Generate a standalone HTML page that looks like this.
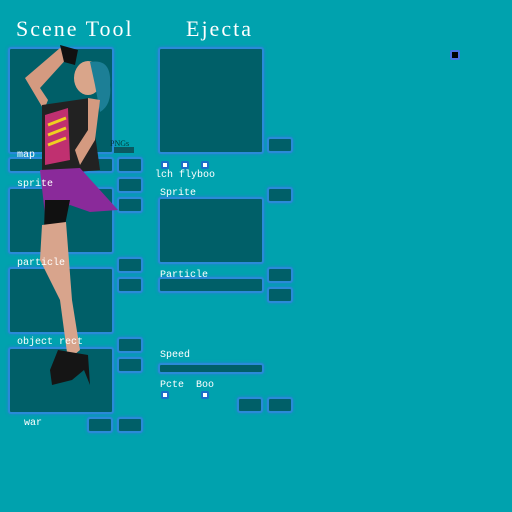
<!DOCTYPE html>
<html><head><style>
body{margin:0;width:512px;height:512px;background:#00a2ae;position:relative;overflow:hidden;font-family:"Liberation Mono","Noto Serif CJK SC",monospace;}
.p{position:absolute;background:#005f68;border:2px solid #2a8ad8;border-radius:3px;box-shadow:0 0 3px #2a7fd8;box-sizing:border-box;}
.t{position:absolute;color:#fff;font-size:10px;line-height:10px;}
.d{position:absolute;width:8px;height:8px;background:#1a6fc8;border-radius:2px;}
.d:after{content:"";position:absolute;left:2px;top:2px;width:4px;height:4px;background:#fff;}
h1{position:absolute;margin:0;color:#fff;font-family:"Liberation Serif",serif;font-weight:normal;font-size:22px;line-height:22px;top:18px;letter-spacing:2px;white-space:nowrap;}
</style></head><body>
<h1 style="left:16px">Scene Tool</h1>
<h1 style="left:186px">Ejecta</h1>

<div class="p" style="left:8px;top:47px;width:106px;height:107px"></div>
<div class="p" style="left:8px;top:157px;width:106px;height:16px"></div>
<div class="p" style="left:117px;top:157px;width:26px;height:16px"></div>
<div class="p" style="left:117px;top:177px;width:26px;height:16px"></div>
<div class="p" style="left:117px;top:197px;width:26px;height:16px"></div>
<div class="p" style="left:8px;top:187px;width:106px;height:67px"></div>
<div class="p" style="left:117px;top:257px;width:26px;height:16px"></div>
<div class="p" style="left:117px;top:277px;width:26px;height:16px"></div>
<div class="p" style="left:8px;top:267px;width:106px;height:67px"></div>
<div class="p" style="left:117px;top:337px;width:26px;height:16px"></div>
<div class="p" style="left:117px;top:357px;width:26px;height:16px"></div>
<div class="p" style="left:8px;top:347px;width:106px;height:67px"></div>
<div class="p" style="left:87px;top:417px;width:26px;height:16px"></div>
<div class="p" style="left:117px;top:417px;width:26px;height:16px"></div>

<div class="p" style="left:158px;top:47px;width:106px;height:107px"></div>
<div class="p" style="left:267px;top:137px;width:26px;height:16px"></div>
<div class="p" style="left:267px;top:187px;width:26px;height:16px"></div>
<div class="p" style="left:158px;top:197px;width:106px;height:67px"></div>
<div class="p" style="left:267px;top:267px;width:26px;height:16px"></div>
<div class="p" style="left:267px;top:287px;width:26px;height:16px"></div>
<div class="p" style="left:158px;top:277px;width:106px;height:16px"></div>
<div class="p" style="left:158px;top:363px;width:106px;height:11px"></div>
<div class="p" style="left:237px;top:397px;width:26px;height:16px"></div>
<div class="p" style="left:267px;top:397px;width:26px;height:16px"></div>

<div class="d" style="left:161px;top:161px"></div>
<div class="d" style="left:181px;top:161px"></div>
<div class="d" style="left:201px;top:161px"></div>
<div class="d" style="left:161px;top:391px"></div>
<div class="d" style="left:201px;top:391px"></div>
<div style="position:absolute;left:450px;top:50px;width:10px;height:10px;background:#4a6ee0;border-radius:2px"><div style="margin:2px;width:6px;height:6px;background:#000"></div></div>

<svg style="position:absolute;left:0;top:0" width="512" height="512">
<path d="M25 78 L60 48 L70 55 L40 88 L48 100 L44 110 Z" fill="#d49a80"/>
<path d="M60 45 L78 50 L75 65 L64 62 Z" fill="#111"/>
<ellipse cx="88" cy="78" rx="14" ry="17" fill="#d9a58a"/>
<path d="M90 62 Q112 58 110 85 Q112 105 100 112 L95 85 Z" fill="#1c7f96"/>
<path d="M42 105 L90 98 L100 170 L42 175 Z" fill="#222"/>
<path d="M45 115 L68 108 L70 160 L45 165 Z" fill="#c03070"/>
<path d="M48 125 L66 118 M48 135 L66 128 M48 145 L66 138" stroke="#f0d020" stroke-width="3"/>
<path d="M88 98 L100 100 L95 140 L80 165 L75 150 L88 130 Z" fill="#d49a80"/>
<path d="M40 170 L80 168 L118 210 L90 212 L70 205 L45 215 Z" fill="#8a2a9a"/>
<path d="M45 200 L70 200 L65 225 L44 230 Z" fill="#111"/>
<path d="M42 225 L66 222 L72 300 L80 350 L68 360 L60 300 L40 260 Z" fill="#d8a48c"/>
<path d="M58 350 L88 355 L90 385 L84 370 L72 380 L52 385 L50 370 Z" fill="#151515"/>
<text x="110" y="146" font-size="8" fill="#033" font-family="Liberation Serif">PNGs</text>
<rect x="114" y="147" width="20" height="6" fill="#0a5a62"/>
</svg>

<div class="t" style="left:17px;top:151px">map</div>
<div class="t" style="left:17px;top:180px">sprite</div>
<div class="t" style="left:17px;top:259px">particle</div>
<div class="t" style="left:17px;top:338px">object rect</div>
<div class="t" style="left:24px;top:419px">war</div>
<div class="t" style="left:155px;top:171px">lch flyboo</div>
<div class="t" style="left:160px;top:189px">Sprite</div>
<div class="t" style="left:160px;top:271px">Particle</div>
<div class="t" style="left:160px;top:351px">Speed</div>
<div class="t" style="left:160px;top:381px">Pcte&nbsp;&nbsp;Boo</div>
</body></html>
